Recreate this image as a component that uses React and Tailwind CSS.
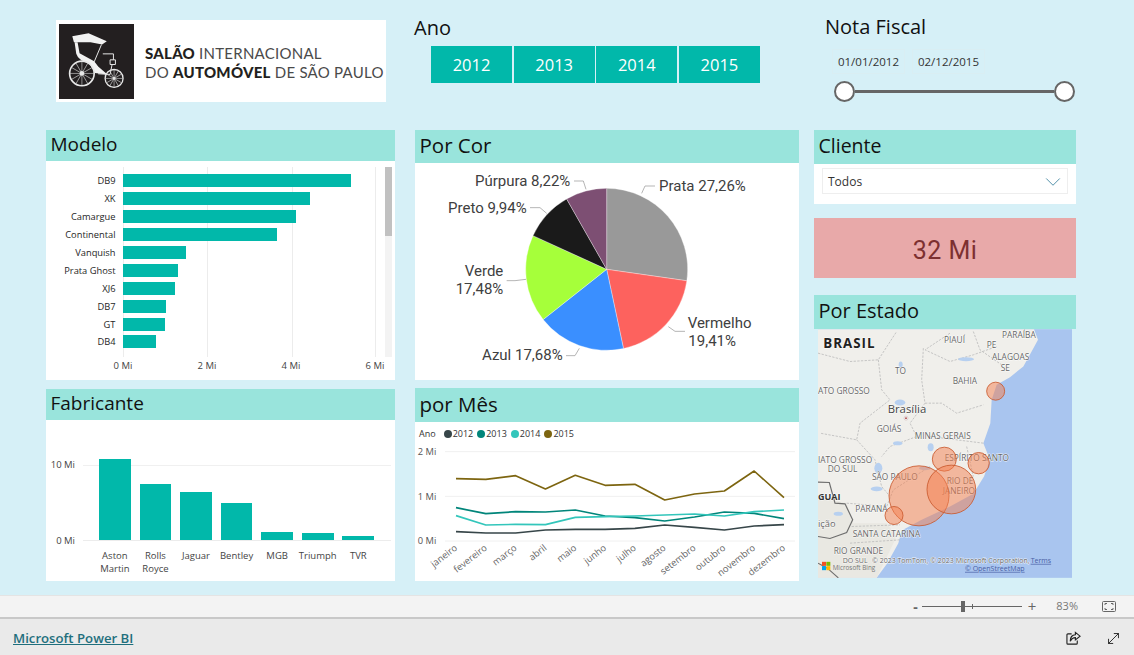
import { MoveDiagonal, ChevronDown } from "lucide-react";

const modelos = [
  ["DB9", 228], ["XK", 187], ["Camargue", 173], ["Continental", 154], ["Vanquish", 63],
  ["Prata Ghost", 55], ["XJ6", 52], ["DB7", 43], ["GT", 42], ["DB4", 33],
];
const fabricantes = [
  ["Aston", "Martin", 81], ["Rolls", "Royce", 55.7], ["Jaguar", "", 48], ["Bentley", "", 37.3],
  ["MGB", "", 8], ["Triumph", "", 6.7], ["TVR", "", 4],
];
const meses = ["janeiro", "fevereiro", "março", "abril", "maio", "junho", "julho", "agosto", "setembro", "outubro", "novembro", "dezembro"];
const linhas = [
  { ano: "2012", cor: "#374649", w: 5, ys: [440, 444, 444, 435, 433, 433, 430, 420, 427, 435, 423, 419] },
  { ano: "2013", cor: "#01857a", w: 5, ys: [368, 386, 380, 381, 375, 393, 398, 408, 396, 381, 385, 401] },
  { ano: "2014", cor: "#33c6bb", w: 5, ys: [392, 420, 418, 419, 397, 395, 393, 390, 387, 393, 380, 375] },
  { ano: "2015", cor: "#7d6510", w: 5, ys: [281, 283, 272, 312, 271, 301, 298, 345, 327, 318, 258, 338] },
];
const fatias = [
  [27.26, "#999999"], [19.41, "#fd625e"], [17.68, "#3a8fff"], [17.48, "#a6ff3a"], [9.94, "#1a1a1a"], [8.23, "#7d4f73"],
];

function Titulo({ children, className }) {
  return <div className={`bg-[#99e4dc] pl-[4.5px] text-[#111] ${className}`}>{children}</div>;
}

function Carruagem() {
  const raios = [0, 30, 60, 90, 120, 150];
  return (
    <svg viewBox="0 0 226 226" className="w-[75px] h-[75px] shrink-0">
      <rect width="226" height="226" fill="#231f20" />
      <path d="M40 37 L89 28 L144 52 L130 62 L95 55 L45 55 Z" fill="#f2f2f2" />
      <path d="M47 55 L52 90 Q58 110 92 120 L108 148 L146 152 L118 128 L106 112 L62 88 L56 55 Z" fill="#f2f2f2" />
      <path d="M128 62 L106 114 M132 90 L164 90 L164 108 M154 108 h16 v14 h-16 z M160 122 L154 152 L118 150" stroke="#e8e8e8" strokeWidth="3" fill="none" />
      <circle cx="69" cy="149" r="37" fill="none" stroke="#e8e8e8" strokeWidth="5" />
      <circle cx="166" cy="164" r="27" fill="none" stroke="#e8e8e8" strokeWidth="4" />
      {raios.map((a) => (
        <g key={a} stroke="#d8d8d8" strokeWidth="1.8">
          <line x1="69" y1="113" x2="69" y2="185" transform={`rotate(${a} 69 149)`} />
          <line x1="166" y1="138" x2="166" y2="190" transform={`rotate(${a} 166 164)`} />
        </g>
      ))}
      <circle cx="69" cy="149" r="7" fill="#e8e8e8" />
      <circle cx="166" cy="164" r="4" fill="#e8e8e8" />
    </svg>
  );
}

function Pizza() {
  const cx = 590, cy = 418, r = 243;
  let acum = 0;
  const ponto = (p) => {
    const a = (p / 100) * 2 * Math.PI;
    return `${cx + r * Math.sin(a)} ${cy - r * Math.cos(a)}`;
  };
  const rotulo = { fill: "#404040", fontSize: 45 };
  return (
    <svg viewBox="15 99 1152 651" className="w-[384px] h-[217px] block font-['Roboto',sans-serif]">
      {fatias.map(([v, cor]) => {
        const d = `M${cx} ${cy} L${ponto(acum)} A${r} ${r} 0 0 1 ${ponto(acum + v)} Z`;
        acum += v;
        return <path key={cor} d={d} fill={cor} stroke="#ffffff" strokeWidth="1" />;
      })}
      <g fill="none" stroke="#a6a6a6" strokeWidth="2.5">
        <path d="M695 190 L705 168 L735 168" />
        <path d="M775 590 L795 604 L825 604" />
        <path d="M508 655 L495 677 L468 677" />
        <path d="M348 448 L315 452 L290 452" />
        <path d="M410 250 L390 233 L360 233" />
        <path d="M528 178 L520 153 L492 153" />
      </g>
      <text x="747" y="183" {...rotulo}>Prata 27,26%</text>
      <text x="833" y="594" {...rotulo}>Vermelho</text>
      <text x="835" y="648" {...rotulo}>19,41%</text>
      <text x="458" y="690" textAnchor="end" {...rotulo}>Azul 17,68%</text>
      <text x="280" y="438" textAnchor="end" {...rotulo}>Verde</text>
      <text x="280" y="492" textAnchor="end" {...rotulo}>17,48%</text>
      <text x="350" y="248" textAnchor="end" {...rotulo}>Preto 9,94%</text>
      <text x="481" y="168" textAnchor="end" {...rotulo}>Púrpura 8,22%</text>
    </svg>
  );
}

function Linhas() {
  const xs = meses.map((_, i) => 138 + i * 89.45);
  return (
    <svg viewBox="15 171 1152 417" className="w-[384px] h-[139px] block">
      <g stroke="#f0f0f0" strokeWidth="3">
        <line x1="105" y1="200" x2="1155" y2="200" />
        <line x1="105" y1="334" x2="1155" y2="334" />
        <line x1="105" y1="468" x2="1155" y2="468" />
      </g>
      <g fill="#555" fontSize="28" textAnchor="end">
        <text x="79" y="209">2 Mi</text>
        <text x="79" y="344">1 Mi</text>
        <text x="79" y="477">0 Mi</text>
      </g>
      {linhas.map((l) => (
        <polyline key={l.ano} fill="none" stroke={l.cor} strokeWidth={l.w} strokeLinejoin="round" points={l.ys.map((y, i) => `${xs[i]},${y}`).join(" ")} />
      ))}
      <g fill="#666" fontSize="28" textAnchor="end">
        {meses.map((m, i) => (
          <text key={m} x={xs[i]} y="494" transform={`rotate(-38 ${xs[i]} 485)`}>{m}</text>
        ))}
      </g>
    </svg>
  );
}

function Rotulo({ x, y, children, size = 25, anchor = "start", cor = "#666" }) {
  return (
    <text x={x} y={y} fontSize={size} textAnchor={anchor} fill={cor} stroke="#ffffff" strokeOpacity="0.8" strokeWidth="3" paintOrder="stroke" strokeLinejoin="round">
      {children}
    </text>
  );
}

function Mapa() {
  const bolhas = [[557, 304, 27], [403, 508, 36], [506, 520, 32], [327, 618, 90], [424, 599, 73], [252, 677, 27]];
  return (
    <svg viewBox="24 118 762 746" className="w-[254px] h-[249px] block ml-[4px] font-['Open_Sans',sans-serif]">
      <rect x="24" y="118" width="762" height="746" fill="#a9c5ef" />
      <path d="M24 118 L672 118 L684 150 L662 190 L640 230 L600 262 L560 285 L545 330 L541 400 L520 460 L540 510 L522 560 L490 612 L420 650 L335 690 L275 722 L265 760 L232 820 L200 864 L24 864 Z" fill="#f0efeb" />
      <path d="M24 620 L110 640 L130 700 L230 700 L260 740 L200 864 L24 864 Z" fill="#e9e8e2" />
      <g fill="none" stroke="#bcbcbc" strokeWidth="2.5" strokeDasharray="7 4">
        <path d="M24 190 L120 215 L205 210 L260 125" />
        <path d="M205 210 L215 300 L240 330 L150 400 L140 450 L30 430" />
        <path d="M340 175 L335 270 L345 340 L300 400 L320 440 L240 470 L215 500" />
        <path d="M345 340 L395 340 L440 370 L520 345" />
        <path d="M420 130 L345 180 L420 215 L490 195 L560 170" />
        <path d="M490 125 L510 180 L575 225" />
        <path d="M520 460 L440 450 L360 440 M470 470 L490 560" />
        <path d="M140 450 L195 510 L215 590 L240 620" />
        <path d="M110 640 L230 650 L250 600 L360 530" />
        <path d="M125 710 L270 705" />
        <path d="M120 760 L270 750" />
      </g>
      <g fill="#b7d0f0">
        <ellipse cx="270" cy="338" rx="16" ry="9" />
        <ellipse cx="272" cy="225" rx="6" ry="10" />
        <ellipse cx="468" cy="208" rx="24" ry="6" />
        <ellipse cx="263" cy="460" rx="14" ry="6" />
        <ellipse cx="362" cy="472" rx="9" ry="12" />
        <ellipse cx="205" cy="535" rx="12" ry="16" />
        <ellipse cx="200" cy="597" rx="18" ry="7" />
        <ellipse cx="345" cy="535" rx="18" ry="6" />
        <ellipse cx="85" cy="672" rx="14" ry="6" />
      </g>
      <g fill="none" stroke="#6d6d6d" strokeWidth="3.5">
        <path d="M24 577 L58 578 L75 640 L105 642 L128 690 L110 728 L60 746 L24 740" />
        <path d="M24 820 L52 835 L85 864" />
      </g>
      <Rotulo x="40" y="174" size={40} cor="#222">
        <tspan fontWeight="700" letterSpacing="3">BRASIL</tspan>
      </Rotulo>
      <Rotulo x="402" y="160">PIAUÍ</Rotulo>
      <Rotulo x="576" y="146">PARAÍBA</Rotulo>
      <Rotulo x="530" y="176">PE</Rotulo>
      <Rotulo x="546" y="210">ALAGOAS</Rotulo>
      <Rotulo x="572" y="245">SE</Rotulo>
      <Rotulo x="255" y="252">TO</Rotulo>
      <Rotulo x="428" y="284">BAHIA</Rotulo>
      <Rotulo x="24" y="314">ATO GROSSO</Rotulo>
      <Rotulo x="233" y="369" size={34} cor="#444">Brasília</Rotulo>
      <circle cx="288" cy="385" r="6" fill="#f2f2f2" stroke="#b99" strokeWidth="1" />
      <circle cx="288" cy="385" r="2.5" fill="#a33" />
      <Rotulo x="200" y="428">GOIÁS</Rotulo>
      <Rotulo x="314" y="448">MINAS GERAIS</Rotulo>
      <Rotulo x="24" y="519">IATO GROSSO</Rotulo>
      <Rotulo x="53" y="547">DO SUL</Rotulo>
      <Rotulo x="186" y="572">SÃO PAULO</Rotulo>
      <Rotulo x="404" y="513">ESPÍRITO SANTO</Rotulo>
      <Rotulo x="410" y="584">RIO DE</Rotulo>
      <Rotulo x="398" y="612">JANEIRO</Rotulo>
      <Rotulo x="24" y="630" size={27} cor="#333">
        <tspan fontWeight="700">GUAI</tspan>
      </Rotulo>
      <Rotulo x="136" y="666">PARANÁ</Rotulo>
      <Rotulo x="24" y="711" size={28}>ição</Rotulo>
      <Rotulo x="128" y="741">SANTA CATARINA</Rotulo>
      <Rotulo x="71" y="794">RIO GRANDE</Rotulo>
      <Rotulo x="98" y="820" size={21}>DO SUL</Rotulo>
      {bolhas.map(([x, y, r]) => (
        <circle key={x} cx={x} cy={y} r={r} fill="#f4804f" fillOpacity="0.5" stroke="#c9582c" strokeWidth="2.5" />
      ))}
      <Rotulo x="186" y="819" size={21} cor="#666">© 2023 TomTom, © 2023 Microsoft Corporation,</Rotulo>
      <text x="662" y="819" fontSize="21" fill="#4a5fa5" textDecoration="underline">Terms</text>
      <text x="465" y="843" fontSize="21" fill="#4a5fa5" textDecoration="underline">© OpenStreetMap</text>
      <rect x="36" y="816" width="12" height="12" fill="#f25022" />
      <rect x="49" y="816" width="12" height="12" fill="#7fba00" />
      <rect x="36" y="829" width="12" height="12" fill="#00a4ef" />
      <rect x="49" y="829" width="12" height="12" fill="#ffb900" />
      <text x="68" y="842" fontSize="19" fill="#777">Microsoft Bing</text>
    </svg>
  );
}

export default function App() {
  return (
    <div className="w-[1134px] h-[655px] overflow-hidden flex flex-col font-['Open_Sans',sans-serif] bg-[#d6f0f7]">
      <div className="h-[595px] flex shrink-0">
        {/* coluna esquerda */}
        <div className="ml-[46px] w-[349px]">
          <div className="mt-[20px] ml-[10px] w-[330px] h-[82px] bg-white flex items-center pl-[3px] gap-[11px]">
            <Carruagem />
            <div className="pt-[4px] font-['Lato',sans-serif] text-[15px] leading-[19px] text-[#4a4a4a] tracking-[0.25px] whitespace-nowrap">
              <div><b className="font-black text-[#231f20]">SALÃO</b> INTERNACIONAL</div>
              <div>DO <b className="font-black text-[#231f20]">AUTOMÓVEL</b> DE SÃO PAULO</div>
            </div>
          </div>
          <div className="mt-[28px]">
            <Titulo className="h-[31px] text-[19px] leading-[29px]">Modelo</Titulo>
            <div className="relative h-[219px] bg-white">
              {[77, 161, 245.5, 329].map((x) => (
                <div key={x} style={{ left: x }} className="absolute top-[6px] h-[190px] w-px bg-[#ececec]" />
              ))}
              <div className="absolute left-[339px] top-[6px] w-[7px] h-[190px] bg-[#f3f3f3]">
                <div className="h-[69px] bg-[#c1c1c1]" />
              </div>
              <div className="relative pt-[11px]">
                {modelos.map(([nome, w]) => (
                  <div key={nome} className="flex items-center h-[17.9px]">
                    <div className="w-[69.5px] pt-[1px] text-right text-[9.3px] text-[#252525] whitespace-nowrap">{nome}</div>
                    <div style={{ width: w }} className="ml-[7.5px] h-[13px] bg-[#01b8aa]" />
                  </div>
                ))}
              </div>
              <div className="relative flex ml-[35px] mt-[8px] text-[9.5px] text-[#444]">
                {["0 Mi", "2 Mi", "4 Mi", "6 Mi"].map((t) => (
                  <div key={t} className="w-[84px] shrink-0 text-center">{t}</div>
                ))}
              </div>
            </div>
          </div>
          <div className="mt-[9px]">
            <Titulo className="h-[31px] text-[19px] leading-[29px]">Fabricante</Titulo>
            <div className="relative h-[161px] bg-white">
              <div className="absolute left-[37px] right-[4px] top-[45px] h-px bg-[#f0f0f0]" />
              <div className="absolute left-[37px] right-[4px] top-[120px] h-px bg-[#ececec]" />
              <div className="absolute right-[320px] top-[38px] text-[9.5px] text-[#444]">10 Mi</div>
              <div className="absolute right-[320px] top-[114px] text-[9.5px] text-[#444]">0 Mi</div>
              <div className="relative flex items-end gap-[8.9px] h-[120px] ml-[53px]">
                {fabricantes.map(([a, , h]) => (
                  <div key={a} style={{ height: h }} className="w-[31.7px] bg-[#01b8aa]" />
                ))}
              </div>
              <div className="flex ml-[53px] mt-[10px] gap-[8.9px] text-[9.5px] leading-[12.7px] text-[#444]">
                {fabricantes.map(([a, b]) => (
                  <div key={a} className="w-[31.7px] flex flex-col items-center whitespace-nowrap">
                    <span>{a}</span>
                    <span>{b}</span>
                  </div>
                ))}
              </div>
            </div>
          </div>
        </div>

        {/* coluna central */}
        <div className="ml-[20px] w-[384px]">
          <div className="mt-[14px] -ml-px h-[27px] text-[20px] leading-[27px] text-[#111]">Ano</div>
          <div className="mt-[5px] ml-[16px] w-[329px] h-[37px] flex gap-[1.5px]">
            {["2012", "2013", "2014", "2015"].map((a) => (
              <div key={a} className="flex-1 pt-[2px] bg-[#01b8aa] text-white text-[16.5px] flex items-center justify-center">{a}</div>
            ))}
          </div>
          <div className="mt-[47px]">
            <Titulo className="h-[33px] text-[20.5px] leading-[31px]">Por Cor</Titulo>
            <div className="h-[217px] bg-white">
              <Pizza />
            </div>
          </div>
          <div className="mt-[8px]">
            <Titulo className="h-[34px] text-[20.5px] leading-[33px]">por Mês</Titulo>
            <div className="h-[159px] bg-white">
              <div className="h-[20px] pl-[4px] pt-[3px] flex items-center gap-[4px] text-[9px] text-[#333]">
                <span className="mr-[4px]">Ano</span>
                {linhas.map((l) => (
                  <span key={l.ano} className="flex items-center gap-[1px]">
                    <span style={{ background: l.cor }} className="w-[8px] h-[8px] rounded-full" />
                    {l.ano}
                  </span>
                ))}
              </div>
              <Linhas />
            </div>
          </div>
        </div>

        {/* coluna direita */}
        <div className="ml-[15px] w-[262px]">
          <div className="mt-[13px] ml-[11px] h-[28px] text-[20px] leading-[28px] text-[#111]">Nota Fiscal</div>
          <div className="mt-[8px] ml-[18px] flex gap-[7px] h-[25px] text-[11.5px] text-[#333]">
            <div className="w-[73px] border border-[#d9eef3] flex items-center justify-center">01/01/2012</div>
            <div className="w-[73px] border border-[#d9eef3] flex items-center justify-center">02/12/2015</div>
          </div>
          <div className="mt-[7px] ml-[20px] w-[241px] h-[21px] flex items-center">
            <div className="w-[21px] h-[21px] rounded-full bg-white border-2 border-[#666] shrink-0" />
            <div className="flex-1 h-[3px] bg-[#666]" />
            <div className="w-[21px] h-[21px] rounded-full bg-white border-2 border-[#666] shrink-0" />
          </div>
          <div className="mt-[28px]">
            <Titulo className="h-[34px] text-[19.5px] leading-[32px]">Cliente</Titulo>
            <div className="h-[40px] bg-white px-[8px] pt-[4px]">
              <div className="h-[26px] border border-[#eeeeee] flex items-center justify-between pl-[5px] pr-[1px] pt-[1px] text-[12px] text-[#333]">
                Todos
                <ChevronDown size={26} strokeWidth={0.9} className="text-[#4f8fa8] -my-[4px]" />
              </div>
            </div>
          </div>
          <div className="mt-[14px] pt-[6px] h-[60px] bg-[#e8a9a9] text-[#7d3030] font-['Roboto',sans-serif] text-[25px] flex items-center justify-center tracking-[0.5px]">32 Mi</div>
          <div className="mt-[17px]">
            <Titulo className="h-[34px] text-[20px] leading-[32px]">Por Estado</Titulo>
            <Mapa />
          </div>
        </div>
      </div>

      {/* rodapé */}
      <div className="h-[24px] shrink-0 bg-[#f3f3f3] border-t border-[#e4e4e4] border-b-2 border-b-[#c8c8c8] flex items-center justify-end text-[#666]">
        <span className="text-[14px] font-bold leading-none mr-[4px]">-</span>
        <div className="relative w-[100px] h-px bg-[#666]">
          <div className="absolute left-[39px] -top-[5px] w-[4px] h-[11px] bg-[#666]" />
          <div className="absolute left-[50px] -top-[2px] w-px h-[5px] bg-[#666]" />
        </div>
        <span className="text-[15px] leading-none ml-[6px]">+</span>
        <span className="text-[11px] ml-[20px] mr-[24px] text-[#777]">83%</span>
        <svg viewBox="0 0 14 11" className="w-[14px] h-[11px] mr-[18px]" fill="none" stroke="#666" strokeWidth="1">
          <rect x="0.5" y="0.5" width="13" height="10" rx="1" />
          <path d="M3 4 V2.5 H5 M9 2.5 H11 V4 M11 7 V8.5 H9 M5 8.5 H3 V7" />
        </svg>
      </div>
      <div className="flex-1 bg-[#eaeaea] flex items-center pl-[13px] pr-[12px]">
        <a className="pt-[3px] text-[13.2px] font-semibold underline text-[#1f6f7d]">Microsoft Power BI</a>
        <div className="ml-auto pt-[2px] flex items-center gap-[24px] text-[#222]">
          <svg viewBox="0 0 16 16" className="w-[15px] h-[15px]" fill="none" stroke="currentColor" strokeWidth="1.2">
            <path d="M6 3 H2 a1 1 0 0 0 -1 1 V13 a1 1 0 0 0 1 1 H11 a1 1 0 0 0 1 -1 V10" />
            <path d="M10 1.5 L15 5.5 L10 9.5 V7 C7.5 7 6 8 4.5 11 C4.5 7 6.5 4 10 4 Z" />
          </svg>
          <MoveDiagonal size={17} strokeWidth={1.3} />
        </div>
      </div>
    </div>
  );
}
